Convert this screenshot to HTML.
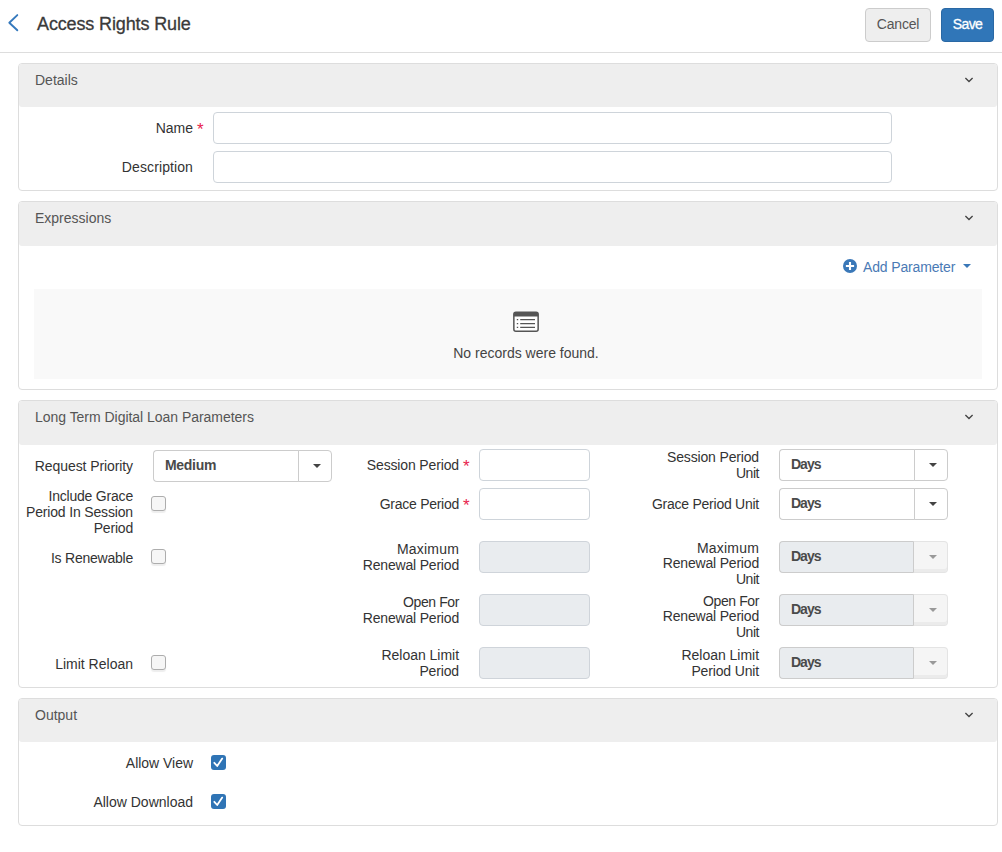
<!DOCTYPE html>
<html lang="en">
<head>
<meta charset="utf-8">
<title>Access Rights Rule</title>
<style>
html,body{margin:0;padding:0;background:#fff;}
body{width:1002px;height:852px;position:relative;overflow:hidden;font-family:"Liberation Sans",Arial,sans-serif;font-size:14px;color:#333;}
*{box-sizing:border-box;}
.abs{position:absolute;}
.t{position:absolute;white-space:nowrap;line-height:16px;font-size:14px;color:#333;}
.r{text-align:right;}
.hdrline{left:0;top:52px;width:1002px;height:1px;background:#ddd;}
.title{left:37px;top:12px;font-size:18px;line-height:24px;letter-spacing:-0.13px;color:#3a3a3a;font-weight:normal;-webkit-text-stroke:0.3px #3a3a3a;}
.btn{position:absolute;top:8px;height:34px;border-radius:4px;font-size:14px;line-height:30px;text-align:center;letter-spacing:-0.2px;}
.cancel{left:865px;width:66px;background:#eee;border:1px solid #ccc;color:#555;}
.save{left:941px;width:53px;background:#3076b8;border:1px solid #2a68a4;color:#fff;-webkit-text-stroke:0.3px #fff;}
.panel{position:absolute;left:18px;width:980px;border:1px solid #ddd;border-radius:4px;background:#fff;}
.ph{position:absolute;left:0;top:0;width:978px;background:#eee;border-radius:3px;}
.pt{position:absolute;left:16px;top:8px;font-size:14px;line-height:16px;color:#555;white-space:nowrap;}
.chev{position:absolute;left:945px;top:13px;width:10px;height:7px;}
.inp{position:absolute;height:32px;border:1px solid #ced4da;border-radius:4px;background:#fff;}
.inp.dis{background:#e9ecef;border-color:#cfd4da;}
.sel{position:absolute;width:169px;height:32px;}
.sel .m{position:absolute;left:0;top:0;width:136px;height:32px;border:1px solid #ccc;border-right:0;border-radius:4px 0 0 4px;background:#fff;}
.sel .b{position:absolute;left:135px;top:0;width:34px;height:32px;border:1px solid #ccc;border-radius:0 4px 4px 0;background:#fff;}
.sel .v{position:absolute;left:12px;top:7px;font-size:14px;line-height:16px;font-weight:bold;color:#4a4a4a;white-space:nowrap;letter-spacing:-0.3px;}
.sel .c{position:absolute;left:150px;top:14px;width:0;height:0;border-left:4px solid transparent;border-right:4px solid transparent;border-top:4px solid #444;}
.sel.dis .m{background:#e9ecef;border-color:#ccc;width:135px;}
.sel.dis .b{left:134px;width:35px;background:#f5f5f5;border-color:#e4e4e4;border-left-color:#ccc;box-shadow:inset 0 -3px 0 #ebebeb;}
.sel.dis .c{border-top-color:#999;}
.cb{position:absolute;width:15px;height:15px;border:1px solid #adadad;border-radius:3px;background:#f6f6f6;box-shadow:0 1.5px 1px rgba(0,0,0,.07);}
.cbc{position:absolute;width:15px;height:15px;border-radius:3px;background:#2f74b5;}
.req{color:#e8234e;font-size:17px;margin-left:-0.5px;}
</style>
</head>
<body>
<!-- header -->
<svg class="abs" style="left:7px;top:13px" width="13" height="20" viewBox="0 0 13 20"><path d="M10.3 2.1 L2.3 9.7 L10.3 17.3" fill="none" stroke="#3579bd" stroke-width="1.9" stroke-linecap="round" stroke-linejoin="round"/></svg>
<div class="t title">Access Rights Rule</div>
<div class="btn cancel">Cancel</div>
<div class="btn save" style="letter-spacing:-0.6px">Save</div>
<div class="abs hdrline"></div>

<!-- Details -->
<div class="panel" style="top:63px;height:128px;">
  <div class="ph" style="height:43px;"></div>
  <div class="pt">Details</div>
  <svg class="chev" viewBox="0 0 10 7"><path d="M1.4 1.1 L5 4.6 L8.6 1.1" fill="none" stroke="#444" stroke-width="1.35"/></svg>
</div>
<div class="t r" style="left:93px;width:100px;top:120px;">Name</div>
<div class="t req" style="left:197.5px;top:122px;">*</div>
<div class="inp" style="left:213px;top:112px;width:679px;"></div>
<div class="t r" style="left:93px;width:100px;top:159px;"><span style="letter-spacing:0.1px">Description</span></div>
<div class="inp" style="left:213px;top:151px;width:679px;"></div>

<!-- Expressions -->
<div class="panel" style="top:201px;height:189px;">
  <div class="ph" style="height:44px;"></div>
  <div class="pt">Expressions</div>
  <svg class="chev" viewBox="0 0 10 7"><path d="M1.4 1.1 L5 4.6 L8.6 1.1" fill="none" stroke="#444" stroke-width="1.35"/></svg>
</div>
<svg class="abs" style="left:843px;top:259px" width="14" height="14" viewBox="0 0 14 14"><circle cx="7" cy="7" r="7" fill="#3a78b8"/><path d="M7 2.9 V11.1 M2.9 7 H11.1" stroke="#fff" stroke-width="2.1" fill="none"/></svg>
<div class="t" style="left:863px;top:259px;color:#4a7ab5;"><span style="letter-spacing:-0.15px">Add Parameter</span></div>
<div class="abs" style="left:963px;top:264px;width:0;height:0;border-left:4px solid transparent;border-right:4px solid transparent;border-top:4px solid #3a78b8;"></div>
<div class="abs" style="left:34px;top:289px;width:948px;height:90px;background:#f9f9f9;"></div>
<svg class="abs" style="left:513px;top:311px" width="26" height="22" viewBox="0 0 26 22">
  <rect x="0.85" y="1.35" width="24.3" height="19" rx="2" fill="#fff" stroke="#555" stroke-width="1.5"/>
  <path d="M0.85 5.6 V3.3 Q0.85 1.35 2.8 1.35 H23.2 Q25.15 1.35 25.15 3.3 V5.6 Z" fill="#555"/>
  <path d="M3.8 8.7 H5.2 M7.2 8.7 H22 M3.8 12.6 H5.2 M7.2 12.6 H22 M3.8 16.4 H5.2 M7.2 16.4 H22" stroke="#555" stroke-width="1.2" fill="none"/>
</svg>
<div class="t" style="left:453px;top:345px;width:146px;text-align:center;color:#444;">No records were found.</div>

<!-- Long Term Digital Loan Parameters -->
<div class="panel" style="top:400px;height:288px;">
  <div class="ph" style="height:44px;"></div>
  <div class="pt" style="letter-spacing:-0.03px">Long Term Digital Loan Parameters</div>
  <svg class="chev" viewBox="0 0 10 7"><path d="M1.4 1.1 L5 4.6 L8.6 1.1" fill="none" stroke="#444" stroke-width="1.35"/></svg>
</div>
<!-- col 1 -->
<div class="t r" style="left:23px;width:110px;top:458px;"><span style="letter-spacing:-0.09px">Request Priority</span></div>
<div class="sel" style="left:153px;top:450px;width:179px;"><div class="m" style="width:146px"></div><div class="b" style="left:145px"></div><div class="v">Medium</div><div class="c" style="left:160px"></div></div>
<div class="t r" style="left:13px;width:120px;top:488px;"><span style="letter-spacing:-0.2px">Include Grace</span><br><span style="letter-spacing:-0.16px">Period In Session</span><br><span style="letter-spacing:-0.2px">Period</span></div>
<div class="cb" style="left:151px;top:496px;"></div>
<div class="t r" style="left:23px;width:110px;top:550px;"><span style="letter-spacing:-0.23px">Is Renewable</span></div>
<div class="cb" style="left:151px;top:549px;"></div>
<div class="t r" style="left:23px;width:110px;top:656px;">Limit Reloan</div>
<div class="cb" style="left:151px;top:655px;"></div>
<!-- col 2 -->
<div class="t r" style="left:339px;width:120px;top:457px;"><span style="letter-spacing:-0.14px">Session Period</span></div>
<div class="t req" style="left:463.5px;top:459px;">*</div>
<div class="inp" style="left:479px;top:449px;width:111px;"></div>
<div class="t r" style="left:339px;width:120px;top:496px;"><span style="letter-spacing:-0.27px">Grace Period</span></div>
<div class="t req" style="left:463.5px;top:498px;">*</div>
<div class="inp" style="left:479px;top:488px;width:111px;"></div>
<div class="t r" style="left:339px;width:120px;top:541px;"><span style="letter-spacing:0.2px">Maximum</span><br><span style="letter-spacing:-0.19px">Renewal Period</span></div>
<div class="inp dis" style="left:479px;top:541px;width:111px;"></div>
<div class="t r" style="left:339px;width:120px;top:594px;"><span style="letter-spacing:-0.4px">Open For</span><br><span style="letter-spacing:-0.19px">Renewal Period</span></div>
<div class="inp dis" style="left:479px;top:594px;width:111px;"></div>
<div class="t r" style="left:339px;width:120px;top:647px;"><span style="letter-spacing:-0.03px">Reloan Limit</span><br><span style="letter-spacing:-0.15px">Period</span></div>
<div class="inp dis" style="left:479px;top:647px;width:111px;"></div>
<!-- col 3 -->
<div class="t r" style="left:639px;width:120px;top:449px;"><span style="letter-spacing:-0.16px">Session Period</span><br><span style="letter-spacing:-0.45px">Unit</span></div>
<div class="sel" style="left:779px;top:449px;"><div class="m"></div><div class="b"></div><div class="v" style="letter-spacing:-1px">Days</div><div class="c"></div></div>
<div class="t r" style="left:639px;width:120px;top:496px;"><span style="letter-spacing:-0.25px">Grace Period Unit</span></div>
<div class="sel" style="left:779px;top:488px;"><div class="m"></div><div class="b"></div><div class="v" style="letter-spacing:-1px">Days</div><div class="c"></div></div>
<div class="t r" style="left:639px;width:120px;top:540.7px;line-height:15.5px;"><span style="letter-spacing:0.2px">Maximum</span><br><span style="letter-spacing:-0.19px">Renewal Period</span><br><span style="letter-spacing:-0.45px">Unit</span></div>
<div class="sel dis" style="left:779px;top:541px;"><div class="m"></div><div class="b"></div><div class="v" style="letter-spacing:-1px">Days</div><div class="c"></div></div>
<div class="t r" style="left:639px;width:120px;top:593.5px;line-height:15.5px;"><span style="letter-spacing:-0.4px">Open For</span><br><span style="letter-spacing:-0.19px">Renewal Period</span><br><span style="letter-spacing:-0.45px">Unit</span></div>
<div class="sel dis" style="left:779px;top:594px;"><div class="m"></div><div class="b"></div><div class="v" style="letter-spacing:-1px">Days</div><div class="c"></div></div>
<div class="t r" style="left:639px;width:120px;top:647px;"><span style="letter-spacing:-0.03px">Reloan Limit</span><br><span style="letter-spacing:-0.15px">Period Unit</span></div>
<div class="sel dis" style="left:779px;top:647px;"><div class="m"></div><div class="b"></div><div class="v" style="letter-spacing:-1px">Days</div><div class="c"></div></div>

<!-- Output -->
<div class="panel" style="top:698px;height:128px;">
  <div class="ph" style="height:43px;"></div>
  <div class="pt">Output</div>
  <svg class="chev" viewBox="0 0 10 7"><path d="M1.4 1.1 L5 4.6 L8.6 1.1" fill="none" stroke="#444" stroke-width="1.35"/></svg>
</div>
<div class="t r" style="left:73px;width:120px;top:755px;"><span style="letter-spacing:-0.03px">Allow View</span></div>
<div class="cbc" style="left:211px;top:755px;"><svg width="15" height="15" viewBox="0 0 15 15" style="display:block"><path d="M3.3 7.8 L6.2 11 L11.2 3.6" fill="none" stroke="#fff" stroke-width="1.8" stroke-linecap="round" stroke-linejoin="round"/></svg></div>
<div class="t r" style="left:73px;width:120px;top:794px;">Allow Download</div>
<div class="cbc" style="left:211px;top:794px;"><svg width="15" height="15" viewBox="0 0 15 15" style="display:block"><path d="M3.3 7.8 L6.2 11 L11.2 3.6" fill="none" stroke="#fff" stroke-width="1.8" stroke-linecap="round" stroke-linejoin="round"/></svg></div>
</body>
</html>
